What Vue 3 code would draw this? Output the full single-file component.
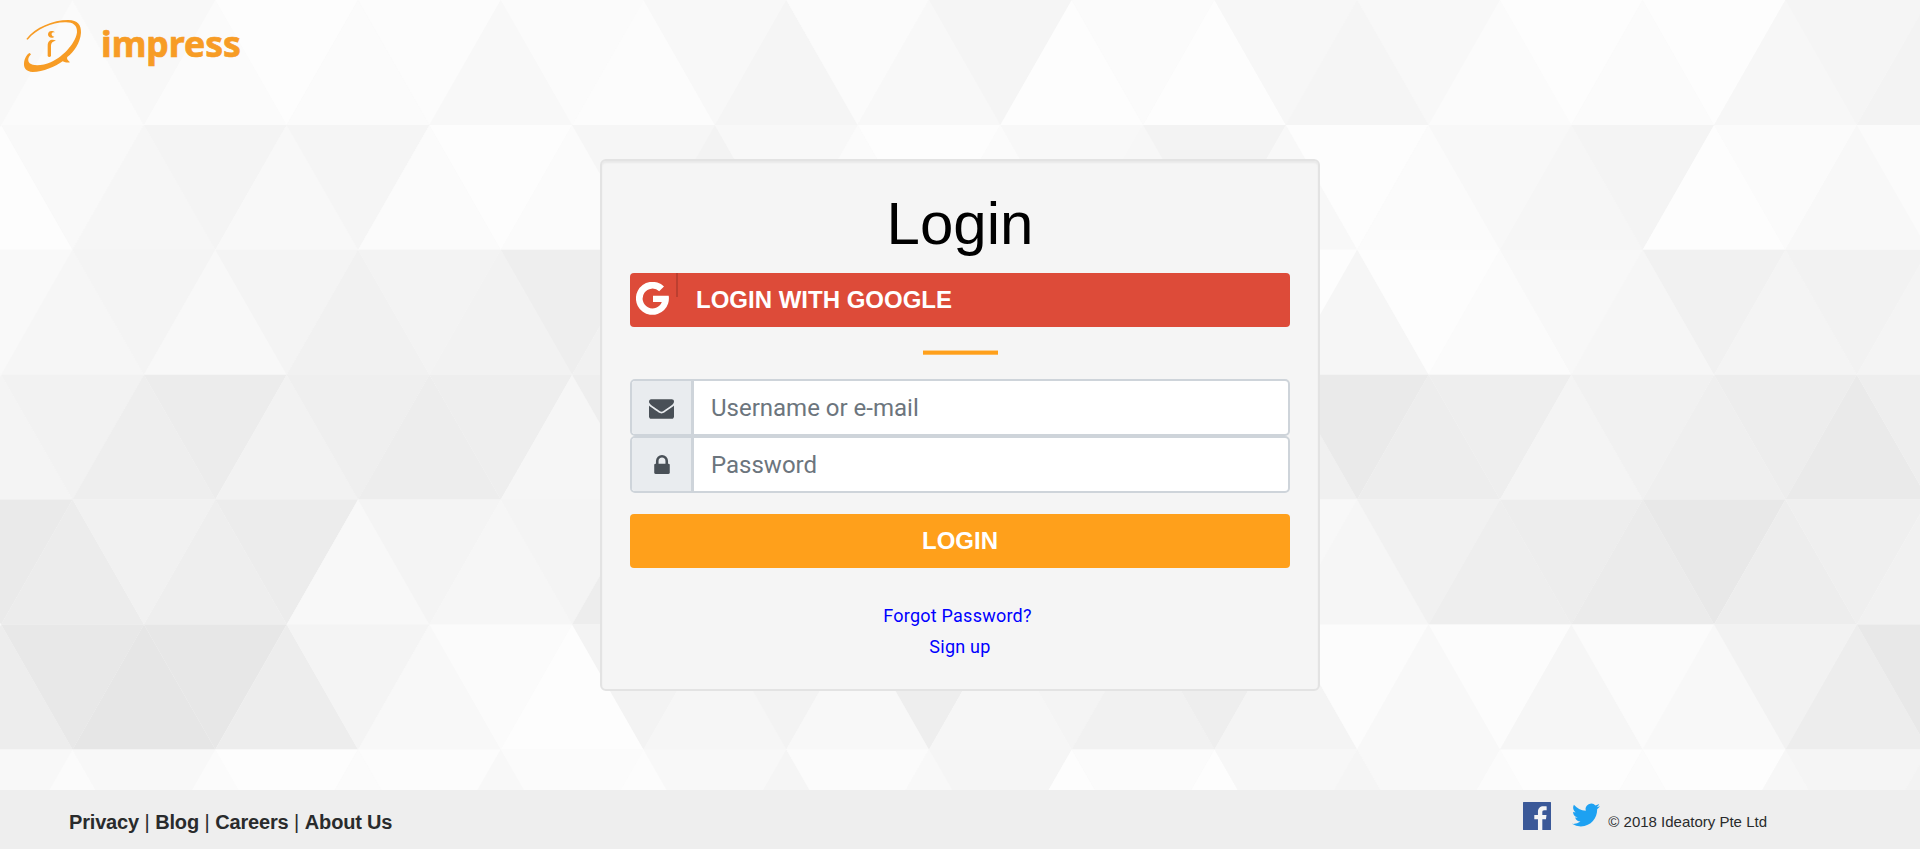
<script setup>
import { ref } from 'vue'

const username = ref('')
const password = ref('')

// Grey levels of the triangle mosaic, one row per band, left to right.
const shades = [
  'f8 fb f8 fb fd fb fc f8 fb fc f8 f5 fb f8 f5 fd fb fd f7 f5 f8 fb fd fb fd f7 f5 f3',
  'fd f9 f6 f4 f8 f5 fb fd fb f6 f3 f8 fb fd fb f8 f7 f3 f8 fd fb f8 f6 f4 fd fb f8 fb',
  'f9 f6 f4 f8 f4 f1 f3 f2 ee f1 f3 f3 f3 f3 f3 f3 f3 f3 fd f6 fd fb f8 f6 f1 f4 f2 f4',
  'f4 f2 ee ec f2 ef ed ee f6 ee f3 f3 f3 f3 f3 f3 f3 f3 f0 ea ed ee f4 f1 ef ed ea ee',
  'ea ec f1 ee ec f8 f4 f6 f4 ed f3 f3 f3 f3 f3 f3 f3 f3 f8 f6 f1 ee ed eb e8 ed ef f1',
  'ed e8 e6 e7 ed f4 f8 fb fd f3 f6 f3 f8 ee f6 f4 f1 ee f4 fc f8 fc f6 fb f8 f2 ed e8'
].map((row) => row.split(' '))

const half = 71.37
const band = 124.9
const triangles = []
for (let r = 0; r < 7; r++) {
  shades[r % 6].forEach((s, k) => {
    const cx = 1.2 + half * k
    const top = r * band
    const up = (r + k) % 2 === 1
    const base = up ? top + band : top
    const tip = up ? top : top + band
    triangles.push({
      points: `${cx - half},${base} ${cx + half},${base} ${cx},${tip}`,
      color: `#${s}${s}${s}`
    })
  })
}
</script>

<template>
  <div class="page">
    <svg class="mosaic" width="1920" height="849" viewBox="0 0 1920 849">
      <polygon v-for="(t, i) in triangles" :key="i" :points="t.points" :fill="t.color" />
    </svg>

    <header class="top">
      <svg width="270" height="90" viewBox="0 0 270 90" fill="#f79c25">
        <g transform="scale(.33333)">
          <path d="M79 117C106 82 158 60 205 60C233 60 244 75 243 98C241 128 222 155 202 171C199 175 203 181 210 187C202 189 195 187 188 184C165 200 130 216 98 216C78 215 71 204 72 190C73 175 81 162 89 159L93 163C84 172 82 182 89 190C99 199 130 197 152 187C195 168 228 125 231 97C232 75 218 66 195 67C155 67 110 88 83 119Z" />
          <path d="M144 103C144 91 158 90 165 97C157 95 154 98 155 104C156 108 160 110 163 110C156 117 144 113 144 103Z" />
          <path d="M143 168V137C143 120 156 116 168 122C157 124 153 129 153 139V168C151 172 145 172 143 168Z" />
        </g>
        <text class="brand" x="101" y="57" textLength="140" lengthAdjust="spacingAndGlyphs">impress</text>
      </svg>
    </header>

    <main class="content">
      <section class="card">
        <h1>Login</h1>
        <button class="google" type="button">
          <span class="g-icon">
            <svg width="33" height="33" viewBox="0 0 33 33" fill="#fff">
              <path d="M28 4.600A16.500 16.500 0 1 0 32.700 13.700H17V20H25.800A9.900 9.900 0 1 1 23.200 9.200Z" />
            </svg>
          </span>
          <span class="g-label">LOGIN WITH GOOGLE</span>
        </button>
        <div class="rule"></div>

        <label class="field">
          <span class="addon">
            <svg width="25" height="20" viewBox="0 256 1792 1408" fill="#495057">
              <path d="M1792 710v794q0 66-47 113t-113 47h-1472q-66 0-113-47t-47-113v-794q44 49 101 87 362 246 497 345 57 42 92.500 65.500t94.500 48 110 24.500h2q51 0 110-24.500t94.500-48 92.500-65.500q170-123 498-345 57-39 100-87zm0-294q0 79-49 151t-122 123q-376 261-468 325-10 7-42.500 31t-54 38.500-52 32.500-57.500 27-50 9h-2q-23 0-50-9t-57.500-27-52-32.500-54-38.500-42.500-31q-91-64-262-182.500t-205-142.500q-62-42-117-115.500t-55-136.500q0-78 41.500-130t118.500-52h1472q65 0 112.500 47t47.500 113z" />
            </svg>
          </span>
          <input v-model="username" type="text" placeholder="Username or e-mail" />
        </label>
        <label class="field second">
          <span class="addon">
            <svg width="16" height="19" viewBox="320 128 1152 1408" fill="#495057">
              <path d="M640 768h512v-192q0-106-75-181t-181-75-181 75-75 181v192zm832 96v576q0 40-28 68t-68 28h-960q-40 0-68-28t-28-68v-576q0-40 28-68t68-28h32v-192q0-184 132-316t316-132 316 132 132 316v192h32q40 0 68 28t28 68z" />
            </svg>
          </span>
          <input v-model="password" type="password" placeholder="Password" />
        </label>

        <button class="submit" type="button">LOGIN</button>
        <nav class="links">
          <a class="forgot">Forgot Password?</a>
          <a>Sign up</a>
        </nav>
      </section>
    </main>

    <footer class="bottom">
      <nav class="pages"><b>Privacy</b> | <b>Blog</b> | <b>Careers</b> | <b>About Us</b></nav>
      <div class="social">
        <svg class="fb" width="28" height="28" viewBox="0 0 24 24">
          <rect x="1" y="1" width="22" height="23" fill="#f5f5f5" />
          <path fill="#3b5998" d="M23.500 0H.5C.2 0 0 .2 0 .5v23c0 .3.2.5.5.5h12.318v-9.294H9.689v-3.621h3.129V8.410c0-3.099 1.894-4.785 4.659-4.785 1.325 0 2.464.097 2.796.141v3.240h-1.921c-1.500 0-1.792.721-1.792 1.771v2.311h3.584l-.465 3.630H16.560V24h6.940c.3 0 .5-.2.5-.5V.5c0-.3-.2-.5-.5-.5" />
        </svg>
        <svg class="tw" width="28" height="28" viewBox="0 0 24 24">
          <path fill="#1da1f2" d="M23.953 4.570a10 10 0 01-2.825.775 4.958 4.958 0 002.163-2.723c-.951.555-2.005.959-3.127 1.184a4.920 4.920 0 00-8.384 4.482C7.690 8.095 4.067 6.130 1.640 3.162a4.822 4.822 0 00-.666 2.475c0 1.710.87 3.213 2.188 4.096a4.904 4.904 0 01-2.228-.616v.06a4.923 4.923 0 003.946 4.827 4.996 4.996 0 01-2.212.085 4.936 4.936 0 004.604 3.417 9.867 9.867 0 01-6.102 2.105c-.39 0-.779-.023-1.170-.067a13.995 13.995 0 007.557 2.209c9.053 0 13.998-7.496 13.998-13.985 0-.21 0-.42-.015-.63A9.935 9.935 0 0024 4.590z" />
        </svg>
        <span class="copy">© 2018 Ideatory Pte Ltd</span>
      </div>
    </footer>
  </div>
</template>

<style scoped>
.page {
  position: relative;
  display: flex;
  flex-direction: column;
  height: 849px;
  overflow: hidden;
  background: #f8f8f8;
  font-family: "Liberation Sans", Arial, sans-serif;
}
.mosaic {
  position: absolute;
  left: 0;
  top: 0;
}
.top,
.content,
.bottom {
  position: relative;
}
.top {
  height: 90px;
}
.brand {
  font: 700 35px "Noto Sans", "Open Sans", sans-serif;
  stroke: #f79c25;
  stroke-width: 0.7px;
}
.content {
  flex: 1;
  display: flex;
  justify-content: center;
  align-items: flex-start;
  padding-top: 69px;
}
.card {
  box-sizing: border-box;
  width: 720px;
  height: 532px;
  padding: 30px 28px 0;
  border: 2px solid #e3e3e3;
  border-radius: 6px;
  background: #f5f5f5;
  box-shadow: inset 0 2px 2px rgba(0, 0, 0, 0.05);
  display: flex;
  flex-direction: column;
}
h1 {
  margin: 0;
  font-size: 60px;
  line-height: 66px;
  font-weight: 400;
  text-align: center;
  color: #000;
}
button {
  border: 0;
  padding: 0;
  height: 54px;
  flex: none;
  border-radius: 4px;
  color: #fff;
  font: 700 24px/54px "Liberation Sans", Arial, sans-serif;
}
.google {
  margin-top: 16px;
  display: flex;
  align-items: flex-start;
  text-align: left;
  background: #dd4b39;
}
.g-icon {
  box-sizing: border-box;
  width: 48px;
  height: 24px;
  padding: 9px 0 0 6px;
  border-right: 2px solid rgba(0, 0, 0, 0.15);
  line-height: 0;
}
.g-label {
  margin-left: 18px;
}
.rule {
  width: 75px;
  height: 5px;
  flex: none;
  margin: 23px auto 24px;
  background: linear-gradient(#fccf90 1px, #ffa01b 1px, #ffa01b 4px, #fdb95b 4px);
}
.field {
  box-sizing: border-box;
  display: flex;
  height: 57px;
  flex: none;
  border: 2px solid #ced4da;
  border-radius: 5px;
  background: #fff;
  overflow: hidden;
}
.addon {
  box-sizing: border-box;
  width: 62px;
  display: flex;
  align-items: center;
  justify-content: center;
  padding-top: 3px;
  background: #e9ecef;
  border-right: 3px solid #ced4da;
}
.second .addon {
  padding-top: 0;
}
input {
  flex: 1;
  border: 0;
  outline: 0;
  padding: 0 17px;
  background: transparent;
  font: 400 24px Roboto, sans-serif;
  color: #495057;
}
input::placeholder {
  color: #6c757d;
  opacity: 1;
}
.submit {
  margin-top: 21px;
  background: #ffa01b;
}
.links {
  display: flex;
  flex-direction: column;
  align-items: center;
  margin-top: 32px;
  font: 400 18px/31px Roboto, sans-serif;
  letter-spacing: 0.24px;
  color: #0000ff;
}
.forgot {
  margin-right: 5px;
}
.bottom {
  height: 59px;
  box-sizing: border-box;
  display: flex;
  justify-content: space-between;
  padding: 0 153px 0 69px;
  background: #eee;
}
.pages {
  padding-top: 20px;
  font-size: 20px;
  line-height: 24px;
  color: #292b2c;
}
.pages b {
  letter-spacing: -0.18px;
}
.social {
  display: flex;
  align-items: flex-start;
}
.fb {
  margin: 12px 21px 0 0;
}
.tw {
  margin: 11px 8px 0 0;
}
.copy {
  font-size: 15px;
  line-height: 20px;
  margin-top: 22px;
  color: #292b2c;
}
</style>

<style>
body {
  margin: 0;
}
</style>
